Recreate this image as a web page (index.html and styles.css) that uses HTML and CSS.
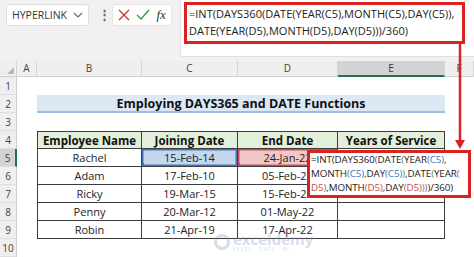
FILE: index.html
```html
<!DOCTYPE html>
<html lang="en">
  <head>
    <meta charset="UTF-8" />
    <title>DAYS360 and DATE</title>
    <link rel="stylesheet" href="styles.css">
  </head>
  <body>
    <div class="topbar">
      <div class="namebox">
        <span>HYPERLINK</span>
        <svg width="10" height="6" viewBox="0 0 10 6"><path d="M1 1 L5 5 L9 1" fill="none" stroke="#666" stroke-width="1.1"/></svg>
      </div>
      <div class="dots">&#8942;</div>
      <div class="fnbox">
        <svg width="12" height="12" viewBox="0 0 12 12"><path d="M1 1 L11 11 M11 1 L1 11" stroke="#d13438" stroke-width="1.4"/></svg>
        <svg width="14" height="12" viewBox="0 0 14 12"><path d="M1 6 L5 10 L13 1" fill="none" stroke="#3a9a4a" stroke-width="1.4"/></svg>
        <span class="fx">fx</span>
      </div>
      <div class="formula">
        <div class="formula-text">=INT(DAYS360(DATE(YEAR(C5),MONTH(C5),DAY(C5)),<br>DATE(YEAR(D5),MONTH(D5),DAY(D5)))/360)</div>
      </div>
    </div>

    <div class="sheet">
      <div class="ch corner"></div><div class="ch">A</div><div class="ch">B</div><div class="ch">C</div><div class="ch">D</div><div class="ch active">E</div><div class="ch">F</div>

      <div class="rh">1</div><div></div><div></div><div></div><div></div><div></div><div></div>

      <div class="rh">2</div><div></div><div class="title">Employing DAYS365 and DATE Functions</div><div></div>

      <div class="rh">3</div><div></div><div></div><div></div><div></div><div></div><div></div>

      <div class="rh">4</div><div></div>
      <div class="c head first top">Employee Name</div>
      <div class="c head top">Joining Date</div>
      <div class="c head top">End Date</div>
      <div class="c head top">Years of Service</div>
      <div></div>

      <div class="rh active">5</div><div></div>
      <div class="c first">Rachel</div>
      <div class="c sel-blue">15-Feb-14</div>
      <div class="c sel-red">24-Jan-22</div>
      <div class="c"></div>
      <div></div>

      <div class="rh">6</div><div></div>
      <div class="c first">Adam</div>
      <div class="c">17-Feb-10</div>
      <div class="c">05-Feb-22</div>
      <div class="c"></div>
      <div></div>

      <div class="rh">7</div><div></div>
      <div class="c first">Ricky</div>
      <div class="c">19-Mar-15</div>
      <div class="c">15-Feb-22</div>
      <div class="c"></div>
      <div></div>

      <div class="rh">8</div><div></div>
      <div class="c first">Penny</div>
      <div class="c">20-Mar-12</div>
      <div class="c">01-May-22</div>
      <div class="c"></div>
      <div></div>

      <div class="rh">9</div><div></div>
      <div class="c first">Robin</div>
      <div class="c">21-Apr-19</div>
      <div class="c">17-Apr-22</div>
      <div class="c"></div>
      <div></div>

      <div class="rh">10</div><div></div><div></div><div></div><div></div><div></div><div></div>

      <div class="watermark">
        <span class="wm-logo"></span>
        <span class="wm-text">exceldemy<small>EXCEL · DATA · BI</small></span>
      </div>

      <div class="edit">=INT(DAYS360<span class="p1">(</span>DATE<span class="p2">(</span>YEAR<span class="ref-c">(C5)</span>,<br>MONTH<span class="ref-c">(C5)</span>,DAY<span class="ref-c">(C5)</span><span class="p2">)</span>,DATE<span class="p2">(</span>YEAR<span class="ref-d">(</span><br><span class="ref-d">D5)</span>,MONTH<span class="ref-d">(D5)</span>,DAY<span class="ref-d">(D5)</span><span class="p2">)</span><span class="p1">)</span>)/360)</div>
    </div>

    <svg class="arrow" width="474" height="257" viewBox="0 0 474 257">
      <path d="M460 44 L460 142" stroke="#d9231f" stroke-width="2.5"/>
      <path d="M455 140 L465 140 L460 149 Z" fill="#d9231f"/>
    </svg>
  </body>
</html>
```

FILE: styles.css
```css
* {
  margin: 0;
  padding: 0;
  box-sizing: border-box;
}

body {
  width: 474px;
  height: 257px;
  overflow: hidden;
  background: #ffffff;
  font-family: 'Open Sans', 'Noto Sans', sans-serif;
  color: #222;
  position: relative;
}

/* formula bar */
.topbar {
  height: 61px;
  background: #f1f1f1;
  display: flex;
  align-items: flex-start;
}

.namebox {
  margin: 4px 0 0 6px;
  width: 83px;
  height: 22px;
  background: #fff;
  border: 1px solid #dedede;
  border-radius: 3px;
  display: flex;
  align-items: center;
  justify-content: space-between;
  padding: 0 5px 0 5px;
  font-size: 10.5px;
  color: #333;
}

.dots {
  margin: 7px 0 0 9px;
  width: 14px;
  font-size: 13px;
  line-height: 14px;
  color: #666;
  font-weight: bold;
}

.fnbox {
  margin: 4px 0 0 0;
  width: 60px;
  height: 22px;
  background: #fff;
  border: 1px solid #e4e4e4;
  border-radius: 3px;
  display: flex;
  align-items: center;
  justify-content: space-around;
  padding: 0 2px;
}

.fx {
  font-family: 'Liberation Serif', serif;
  font-style: italic;
  font-size: 13px;
  color: #333;
}

.formula {
  margin-left: 8px;
  flex: 1;
  height: 57px;
  background: #fff;
  border-left: 1px solid #e0e0e0;
  border-bottom: 1px solid #e0e0e0;
  padding: 2px 0 0 3px;
}

.formula-text {
  width: 281px;
  height: 42px;
  border: 3px solid #d9231f;
  padding: 0 0 0 2px;
  font-size: 11px;
  line-height: 17px;
  white-space: nowrap;
  color: #222;
}

/* sheet grid */
.sheet {
  position: relative;
  display: grid;
  grid-template-columns: 17px 20px 105px 96px 100px 107px 1fr;
  grid-template-rows: 16px repeat(10, 18px);
  font-size: 11px;
}

.ch {
  background: #efefef;
  border-right: 1px solid #d4d4d4;
  border-bottom: 1px solid #cfcfcf;
  font-size: 10px;
  color: #444;
  text-align: center;
  line-height: 15px;
}

.ch.corner {
  position: relative;
}

.ch.corner::after {
  content: '';
  position: absolute;
  right: 2px;
  bottom: 2px;
  border-left: 7px solid transparent;
  border-bottom: 7px solid #b8b8b8;
}

.ch.active {
  background: #d3d3d3;
  border-bottom: 2px solid #217346;
  color: #333;
}

.rh {
  background: #efefef;
  border-right: 1px solid #cfcfcf;
  border-bottom: 1px solid #dedede;
  font-size: 10px;
  color: #444;
  text-align: center;
  line-height: 18px;
}

.rh.active {
  background: #d3d3d3;
  border-right: 2px solid #217346;
}

.title {
  grid-column: span 4;
  background: #dde8f5;
  border-bottom: 2px solid #9dbde3;
  text-align: center;
  font-weight: bold;
  font-size: 12.5px;
  line-height: 17px;
  color: #111;
}

.c {
  border-right: 1px solid #3c3c3c;
  border-bottom: 1px solid #3c3c3c;
  text-align: center;
  line-height: 17px;
  white-space: nowrap;
  overflow: hidden;
}

.c.first {
  border-left: 1px solid #3c3c3c;
}

.c.top {
  border-top: 1px solid #3c3c3c;
}

.c.head {
  background: #e2efda;
  font-weight: bold;
  font-size: 11.5px;
  color: #111;
}

.sel-blue {
  background: #c3d7ee;
  box-shadow: inset 0 0 0 1.5px #3f78c0;
  position: relative;
}

.sel-red {
  background: #f0c8c8;
  box-shadow: inset 0 0 0 1.5px #d04a55;
  position: relative;
}

.sel-blue::before,
.sel-blue::after,
.sel-red::before,
.sel-red::after {
  content: '';
  position: absolute;
  width: 4px;
  height: 4px;
  left: -2px;
}

.sel-blue::before { top: -2px; background: #3f78c0; }
.sel-blue::after { bottom: -1px; background: #3f78c0; }
.sel-red::before { top: -2px; background: #d04a55; }
.sel-red::after { bottom: -1px; background: #d04a55; }

/* cell edit popup */
.edit {
  position: absolute;
  left: 307px;
  top: 89px;
  width: 164px;
  height: 48px;
  background: #fff;
  border: 3px solid #d9231f;
  padding: 0 0 0 1px;
  font-size: 9.8px;
  letter-spacing: -0.1px;
  line-height: 14px;
  white-space: nowrap;
  color: #222;
}

.ref-c { color: #3a78c3; }
.ref-d { color: #c0504d; }
.p1 { color: #8a4fa0; }
.p2 { color: #3a9a4a; }

.watermark {
  position: absolute;
  left: 214px;
  top: 171px;
  display: flex;
  align-items: center;
  gap: 3px;
  opacity: 0.3;
}

.wm-logo {
  width: 16px;
  height: 16px;
  border-radius: 50%;
  border: 3px solid #7a93b8;
}

.wm-text {
  font-size: 15px;
  font-weight: bold;
  color: #7a93b8;
  line-height: 14px;
  display: flex;
  flex-direction: column;
}

.wm-text small {
  font-size: 5px;
  line-height: 6px;
  font-weight: normal;
  letter-spacing: 1px;
}

.arrow {
  position: absolute;
  left: 0;
  top: 0;
  pointer-events: none;
}
```
